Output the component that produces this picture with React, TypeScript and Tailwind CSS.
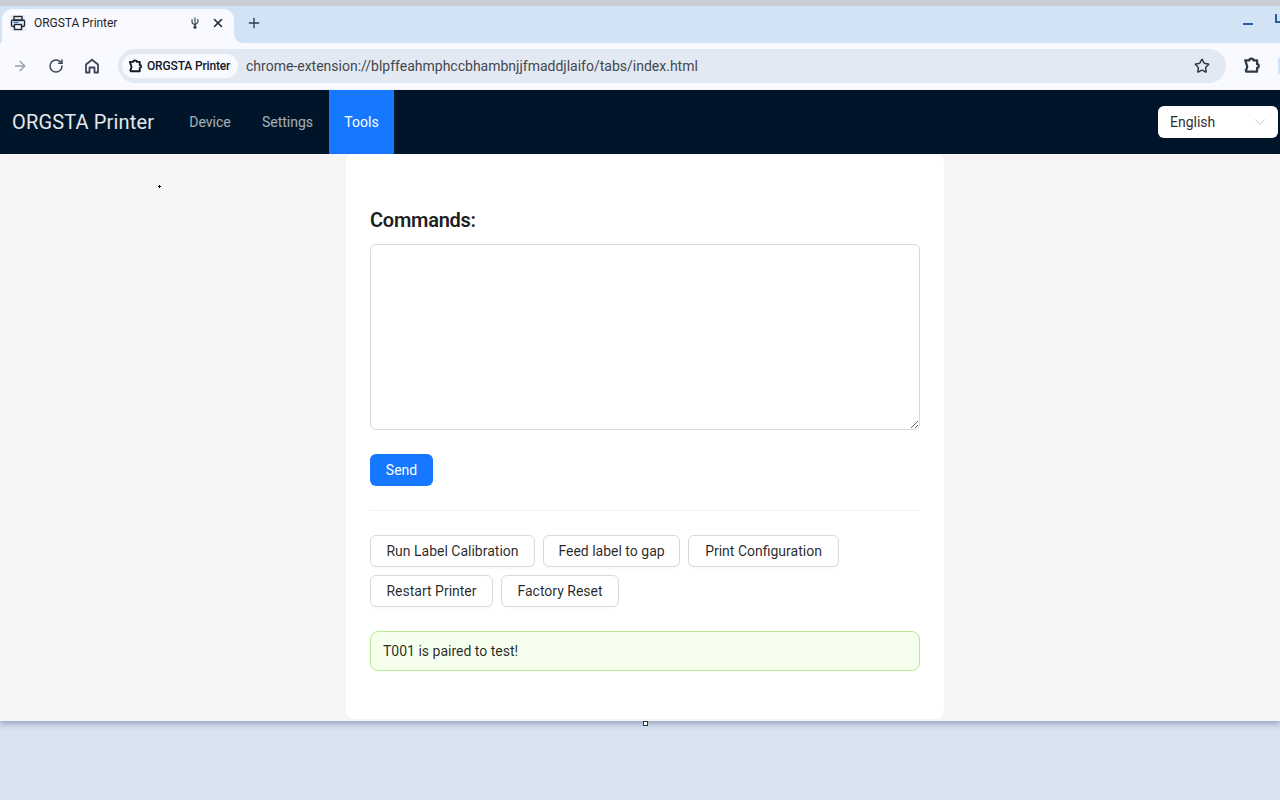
import { ArrowRight, ChevronDown, Plus, RotateCw, Star, X } from 'lucide-react'

const font = { fontFamily: 'Roboto, sans-serif' }

function PuzzleIcon({ className }: { className: string }) {
  return (
    <svg viewBox="0 0 16 16" fill="none" stroke="currentColor" strokeWidth="2" strokeLinejoin="round" className={className}>
      <path d="M2.500 3h3.200c0-2 3.600-2 3.600 0h3.200v3.400c2 0 2 3.200 0 3.200V13H3l-.5-1 1-2.200c.3-.7.3-1.600 0-2.200L2 3z" />
    </svg>
  )
}

function PrinterIcon() {
  return (
    <svg viewBox="0 0 16 16" className="h-4 w-4" fill="none">
      <rect x="4" y="1.500" width="8" height="4" stroke="#1f2937" strokeWidth="1.400" />
      <rect x="1.500" y="5" width="13" height="6.500" rx="1.500" stroke="#1f2937" strokeWidth="1.400" />
      <rect x="3.500" y="6.800" width="5" height="1.300" fill="#2f7de1" />
      <rect x="4.500" y="9.500" width="7" height="5" fill="#f8faff" stroke="#1f2937" strokeWidth="1.400" />
    </svg>
  )
}

function UsbIcon() {
  return (
    <svg viewBox="0 0 12 14" className="h-3 w-[10px]" fill="none" stroke="#2d3a4a" strokeWidth="1.300">
      <path d="M6 .500V13.500M2.500 4v3l3.500 2.500L9.500 6V4" />
      <circle cx="6" cy="12" r="1.300" fill="#2d3a4a" />
      <rect x="1.700" y="2.500" width="1.600" height="1.600" fill="#2d3a4a" stroke="none" />
      <rect x="8.700" y="2.500" width="1.600" height="1.600" fill="#2d3a4a" stroke="none" />
    </svg>
  )
}

function HomeIcon() {
  return (
    <svg viewBox="0 0 16 16" className="h-4 w-4" fill="none" stroke="#3a4657" strokeWidth="1.800" strokeLinejoin="round">
      <path d="M2 14.500V6.500L8 1.800l6 4.700v8h-3.500V9.500h-5v5H2z" />
    </svg>
  )
}

function TabFlare() {
  return (
    <svg viewBox="0 0 10 10" className="h-[10px] w-[10px] shrink-0 self-end">
      <path d="M0 0C0 6 4 10 10 10H0z" fill="#f8faff" />
    </svg>
  )
}

function BrowserChrome() {
  return (
    <div className="shrink-0">
      <div className="h-[6px] bg-[#c8cdd6]" />
      <div className="flex h-[37px] items-end bg-[#d3e3f6] pl-[2px]">
        <div className="flex h-[34px] w-[232px] items-center rounded-t-[10px] bg-[#f8faff] pb-[6px] pl-[8px] pr-[9px]">
          <span className="flex h-4 w-4 items-center justify-center bg-[#eef0f4]">
            <PrinterIcon />
          </span>
          <span className="ml-[8px] flex-1 text-xs tracking-[-0.05px] text-[#1f1f1f]">ORGSTA Printer</span>
          <span className="mr-[11px]">
            <UsbIcon />
          </span>
          <X className="h-3.5 w-3.5 text-[#1f2937]" strokeWidth={2.6} />
        </div>
        <TabFlare />
        <div className="ml-[2px] flex h-[34px] w-4 items-center justify-center pb-[6px]">
          <Plus className="h-4 w-4 text-[#2d3a4a]" strokeWidth={2} />
        </div>
        <div className="ml-auto flex h-[34px] items-start pt-[14px]">
          <div className="mr-[22px] h-[2px] w-[10px] bg-[#27609c]" />
          <div className="-mt-[9px] h-[9px] w-[5px] border-b-2 border-l-2 border-[#27609c]" />
        </div>
      </div>
      <div className="flex h-[46px] items-center bg-[#f8faff] pl-[12px]">
        <ArrowRight className="h-4 w-4 shrink-0 text-[#9aa0a6]" strokeWidth={2} />
        <RotateCw className="ml-[20px] h-4 w-4 shrink-0 text-[#3a4657]" strokeWidth={2.2} />
        <span className="ml-[20px] shrink-0">
          <HomeIcon />
        </span>
        <div className="ml-[18px] flex h-[34px] w-[1108px] shrink-0 items-center rounded-full bg-[#e3e9f3] pl-[4px]">
          <div className="flex h-6 w-[116px] items-center rounded-full bg-[#f8faff] pl-[6px]">
            <PuzzleIcon className="h-[15px] w-[15px] text-[#111827]" />
            <span className="ml-[4px] text-xs font-medium tracking-[-0.15px] text-[#111827]">ORGSTA Printer</span>
          </div>
          <span className="ml-[8px] text-sm text-[#44474c]">chrome-extension://blpffeahmphccbhambnjjfmaddjlaifo/tabs/index.html</span>
          <Star className="ml-auto mr-[16px] h-4 w-4 text-[#2d3a4a]" strokeWidth={2.2} />
        </div>
        <PuzzleIcon className="ml-[17px] h-[18px] w-[18px] shrink-0 text-[#2d3a4a]" />
        <div className="ml-[17px] h-[16px] w-[10px] shrink-0 bg-[#cfe2fd]" />
      </div>
      <div className="h-px bg-[#f1f3fa]" />
    </div>
  )
}

function TopNav() {
  return (
    <header className="flex h-16 shrink-0 items-center bg-[#001529] pl-3 pr-[2px]">
      <span className="mr-5 w-[142px] text-xl tracking-[0.15px] whitespace-nowrap text-white/90">ORGSTA Printer</span>
      <nav className="flex h-full items-center text-sm">
        <a className="flex h-full w-[72px] items-center justify-center text-white/65">Device</a>
        <a className="flex h-full w-[83px] items-center justify-center text-white/65">Settings</a>
        <a className="flex h-full w-[65px] items-center justify-center bg-[#1677ff] text-white">Tools</a>
      </nav>
      <div className="ml-auto flex h-8 w-[120px] items-center justify-between rounded-md bg-white pl-3 pr-[9px] text-sm text-black/85">
        English
        <ChevronDown className="h-[18px] w-[18px] text-black/25" strokeWidth={1.2} />
      </div>
    </header>
  )
}

function ToolButton({ label, width }: { label: string; width: string }) {
  return (
    <button className={`h-8 rounded-md border border-[#d9d9d9] bg-white text-sm text-black/85 shadow-[0_2px_0_rgba(0,0,0,0.02)] ${width}`}>
      {label}
    </button>
  )
}

export default function App() {
  return (
    <div className="relative flex h-[800px] w-[1280px] flex-col overflow-hidden bg-[#d9e3f1]" style={font}>
      <BrowserChrome />
      <TopNav />
      <main className="flex h-[567px] shrink-0 justify-center bg-[#f5f5f5] pl-[10px] shadow-[0_3px_6px_rgba(50,70,110,0.4)]">
        <div className="flex h-[565px] w-[598px] flex-col rounded-lg bg-white px-6 pt-[50px]">
          <h2 className="text-xl leading-[32px] font-semibold tracking-[-0.25px] text-black/90">Commands:</h2>
          <textarea className="mt-2 h-[186px] w-full rounded-md border border-[#d9d9d9] bg-white" />
          <button className="mt-6 h-8 w-[63px] rounded-md bg-[#1677ff] text-sm text-white">Send</button>
          <div className="mt-6 h-px bg-[#f0f0f0]" />
          <div className="mt-6 flex flex-wrap gap-2">
            <ToolButton label="Run Label Calibration" width="w-[165px]" />
            <ToolButton label="Feed label to gap" width="w-[137px]" />
            <ToolButton label="Print Configuration" width="w-[151px]" />
            <ToolButton label="Restart Printer" width="w-[123px]" />
            <ToolButton label="Factory Reset" width="w-[118px]" />
          </div>
          <div className="mt-6 flex h-10 items-center rounded-lg border border-[#b7eb8f] bg-[#f6ffed] px-3 text-sm text-black/85">
            T001 is paired to test!
          </div>
        </div>
      </main>
      {/* stray cursor speck and the window resize handle */}
      <div className="absolute left-[158px] top-[186px] h-px w-[3px] bg-black" />
      <div className="absolute left-[159px] top-[185px] h-[3px] w-px bg-black" />
      <div className="absolute left-[643px] top-[721px] h-[5px] w-[5px] border border-[#333] bg-white" />
    </div>
  )
}
